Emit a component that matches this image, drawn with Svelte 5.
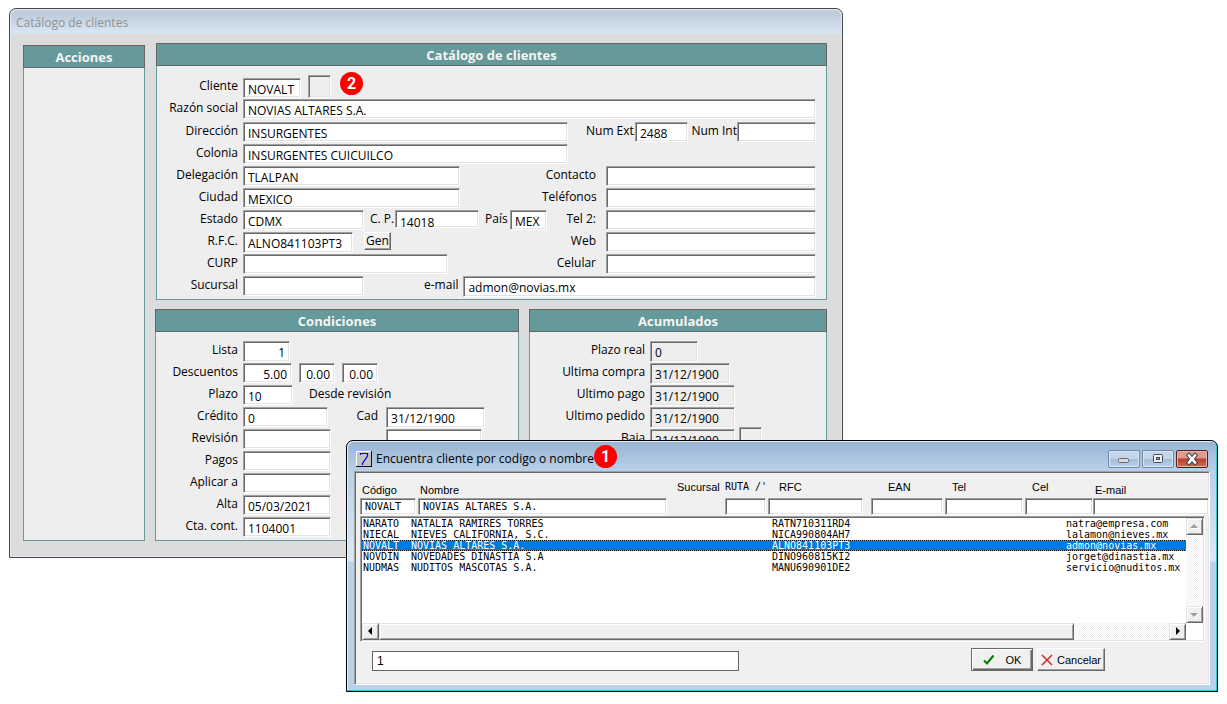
<script>
  const contactFields = {
    delegacion: { id: 'contacto', label: 'Contacto' },
    ciudad: { id: 'telefonos', label: 'Teléfonos' },
    curp: { id: 'celular', label: 'Celular' }
  };

  const dates = [
    { id: 'compra', label: 'Ultima compra', value: '31/12/1900', width: 80 },
    { id: 'pago', label: 'Ultimo pago', value: '31/12/1900', width: 85 },
    { id: 'pedido', label: 'Ultimo pedido', value: '31/12/1900', width: 85 }
  ];

  const terms = [
    { id: 'pagos', label: 'Pagos', value: '' },
    { id: 'aplicar', label: 'Aplicar a', value: '' },
    { id: 'alta', label: 'Alta', value: '05/03/2021' },
    { id: 'cuenta', label: 'Cta. cont.', value: '1104001' }
  ];

  const filters = [
    { id: 'f-codigo', label: 'Código', value: 'NOVALT', cls: 'low' },
    { id: 'f-nombre', label: 'Nombre', value: 'NOVIAS ALTARES S.A.', cls: 'low wide' },
    { id: '', label: 'Sucursal', cls: 'text' },
    { id: 'f-ruta', label: "RUTA /'", value: '', cls: 'ruta' },
    { id: 'f-rfc', label: 'RFC', value: '', cls: 'rfc' },
    { id: 'f-ean', label: 'EAN', value: '', cls: 'ean' },
    { id: 'f-tel', label: 'Tel', value: '', cls: 'tel' },
    { id: 'f-cel', label: 'Cel', value: '', cls: 'cel' },
    { id: 'f-email', label: 'E-mail', value: '', cls: 'low last' }
  ];

  const clients = [
    ['NARATO', 'NATALIA RAMIRES TORRES', 'RATN710311RD4', 'natra@empresa.com'],
    ['NIECAL', 'NIEVES CALIFORNIA, S.C.', 'NICA990804AH7', 'lalamon@nieves.mx'],
    ['NOVALT', 'NOVIAS ALTARES S.A.', 'ALNO841103PT3', 'admon@novias.mx'],
    ['NOVDIN', 'NOVEDADES DINASTIA S.A', 'DINO960815KI2', 'jorget@dinastia.mx'],
    ['NUDMAS', 'NUDITOS MASCOTAS S.A.', 'MANU690901DE2', 'servicio@nuditos.mx']
  ];
  const selected = 'NOVALT';
</script>

{#snippet field(id, label, value, width, cls = '')}
  <label for={id}>{label}</label>
  <input {id} class={cls} type="text" {value} style:width={width ? `${width}px` : null} />
{/snippet}

{#snippet contact({ id, label })}
  <div class="contact">
    <label for={id}>{label}</label>
    <input {id} type="text" value="" />
  </div>
{/snippet}

<div class="desktop">
  <main class="window">
    <header class="caption">Catálogo de clientes</header>
    <div class="content">
      <section class="panel actions"><h2>Acciones</h2></section>
      <div class="column">
        <section class="panel client">
          <h2>Catálogo de clientes</h2>
          <form>
            <div class="row first">
              {@render field('cliente', 'Cliente', 'NOVALT', 58)}
              <button type="button" class="box" aria-label="Buscar"></button>
              <span class="badge">2</span>
            </div>
            <div class="row second">{@render field('razon', 'Razón social', 'NOVIAS ALTARES S.A.', 0, 'grow')}</div>
            <div class="row">
              {@render field('direccion', 'Dirección', 'INSURGENTES', 325)}
              <div class="numbers">
                {@render field('ext', 'Num Ext.', '2488', 53)}
                {@render field('int', 'Num Int', '', 0, 'grow')}
              </div>
            </div>
            <div class="row">{@render field('colonia', 'Colonia', 'INSURGENTES CUICUILCO', 325)}</div>
            <div class="row">
              <div class="side">{@render field('delegacion', 'Delegación', 'TLALPAN', 217)}</div>
              {@render contact(contactFields.delegacion)}
            </div>
            <div class="row">
              <div class="side">{@render field('ciudad', 'Ciudad', 'MEXICO', 217)}</div>
              {@render contact(contactFields.ciudad)}
            </div>
            <div class="row">
              <div class="side">
                {@render field('estado', 'Estado', 'CDMX', 121)}
                <div class="pair">{@render field('cp', 'C. P.', '14018', 84, 'short')}</div>
                <div class="pair">{@render field('pais', 'País', 'MEX', 37)}</div>
              </div>
              {@render contact({ id: 'tel2', label: 'Tel 2:' })}
            </div>
            <div class="row">
              <div class="side">
                {@render field('rfc', 'R.F.C.', 'ALNO841103PT3', 110, 'tall')}
                <button type="button" class="gen">Gen</button>
              </div>
              {@render contact({ id: 'web', label: 'Web' })}
            </div>
            <div class="row">
              <div class="side">{@render field('curp', 'CURP', '', 205)}</div>
              {@render contact(contactFields.curp)}
            </div>
            <div class="row">
              {@render field('sucursal', 'Sucursal', '', 121)}
              <div class="mail">{@render field('email', 'e-mail', 'admon@novias.mx', 0, 'tall grow')}</div>
            </div>
          </form>
        </section>

        <div class="lower">
          <section class="panel terms">
            <h2>Condiciones</h2>
            <form>
              <div class="row">{@render field('lista', 'Lista', '1', 47, 'num tall')}</div>
              <div class="row">
                {@render field('desc1', 'Descuentos', '5.00', 49, 'num')}
                <input class="num extra" type="text" value="0.00" aria-label="Segundo descuento" />
                <input class="num extra" type="text" value="0.00" aria-label="Tercer descuento" />
              </div>
              <div class="row">
                {@render field('plazo', 'Plazo', '10', 50)}
                <span class="note">Desde revisión</span>
              </div>
              <div class="row">
                {@render field('credito', 'Crédito', '0', 85)}
                <div class="expiry">{@render field('cad', 'Cad', '31/12/1900', 99, 'tall')}</div>
              </div>
              <div class="row">
                {@render field('revision', 'Revisión', '', 88)}
                <div class="expiry"><span class="blank"></span><input type="text" value="" aria-label="Segunda fecha" style:width="96px" /></div>
              </div>
              {#each terms as t}
                <div class="row">{@render field(t.id, t.label, t.value, 88)}</div>
              {/each}
            </form>
          </section>

          <section class="panel totals">
            <h2>Acumulados</h2>
            <form>
              <div class="row">{@render field('plazoreal', 'Plazo real', '0', 48, 'tall flat')}</div>
              {#each dates as d}
                <div class="row">{@render field(d.id, d.label, d.value, d.width, 'tall flat')}</div>
              {/each}
              <div class="row">
                {@render field('baja', 'Baja', '31/12/1900', 85, 'tall flat')}
                <button type="button" class="box" aria-label="Dar de baja"></button>
              </div>
            </form>
          </section>
        </div>
      </div>
    </div>
  </main>

  <div class="dialog" role="dialog" aria-labelledby="dialog-title">
    <header class="titlebar">
      <svg class="app" viewBox="0 0 16 16" aria-hidden="true">
        <path d="M0 0h16v16H0z" fill="#fff" />
        <path d="M15 0h1v16H0v-1h15z" fill="#111" />
        <path d="M1 1h14v14H1z" fill="#c3c3c3" />
        <path d="M4.500 4V2.500h7V5L6.500 12.500V14" fill="none" stroke="#0000f0" stroke-width="1.200" />
      </svg>
      <span id="dialog-title">Encuentra cliente por codigo o nombre</span>
      <span class="badge">1</span>
      <div class="tools">
        <button type="button" aria-label="Minimizar">
          <svg viewBox="0 0 30 16"><rect x="9.500" y="7.500" width="10" height="4" rx="1" fill="#dddad4" stroke="#666b76" /></svg>
        </button>
        <button type="button" aria-label="Maximizar">
          <svg viewBox="0 0 30 16"><rect x="10.500" y="3.500" width="9" height="8" rx="1" fill="#f4f4f4" stroke="#454b5c" /><rect x="13.500" y="6.500" width="3" height="2" fill="#8fa8cb" stroke="#454b5c" /></svg>
        </button>
        <button type="button" class="close" aria-label="Cerrar">
          <svg viewBox="0 0 30 16"><path d="M12 4.500l6 7m0-7l-6 7" stroke="#414656" stroke-width="4.600" stroke-linecap="square" /><path d="M12 4.500l6 7m0-7l-6 7" stroke="#fff" stroke-width="2.600" stroke-linecap="square" /></svg>
        </button>
      </div>
    </header>

    <div class="sheet">
      <div class="filters">
        {#each filters as f}
          <div class="filter {f.cls}">
            {#if f.id}
              <label for={f.id}>{f.label}</label>
              <input id={f.id} type="text" value={f.value} />
            {:else}
              <span>{f.label}</span>
            {/if}
          </div>
        {/each}
      </div>

      <div class="list">
        <div class="rows">
          <table>
            <tbody>
              {#each clients as c}
                <tr class:selected={c[0] === selected}>
                  {#each c as cell}<td>{cell}</td>{/each}
                </tr>
              {/each}
            </tbody>
          </table>
        </div>
        <div class="vbar">
          <button type="button" aria-label="Subir"><svg viewBox="0 0 13 13"><path d="M3 9l4-4 4 4z" fill="#fff" /><path d="M2 8l4-4 4 4z" fill="#a0a0a0" /></svg></button>
          <button type="button" aria-label="Bajar"><svg viewBox="0 0 13 13"><path d="M3 6l4 4 4-4z" fill="#fff" /><path d="M2 5l4 4 4-4z" fill="#a0a0a0" /></svg></button>
        </div>
        <div class="hbar">
          <button type="button" aria-label="Izquierda"><svg viewBox="0 0 13 13"><path d="M8 2v8L4 6z" fill="#000" /></svg></button>
          <div class="track"><div class="thumb"></div></div>
          <button type="button" aria-label="Derecha"><svg viewBox="0 0 13 13"><path d="M5 2v8l4-4z" fill="#000" /></svg></button>
        </div>
      </div>

      <div class="footer">
        <input type="text" value="1" aria-label="Buscar" />
        <div class="buttons">
          <button type="button" class="ok">
            <svg viewBox="0 0 12 12"><path d="M1 6.500l3 3L10.500 1.500" fill="none" stroke="#008000" stroke-width="2" /></svg>
            <span>OK</span>
          </button>
          <button type="button">
            <svg viewBox="0 0 12 12"><path d="M1 1l10 10M11 1L1 11" fill="none" stroke="#d03030" stroke-width="1.600" /></svg>
            <span>Cancelar</span>
          </button>
        </div>
      </div>
    </div>
  </div>
</div>

<style>
  :global(body) {
    background: #fff;
  }

  .desktop {
    position: relative;
    min-height: 100vh;
    overflow: hidden;
    box-sizing: border-box;
    font: 12px/18px 'Open Sans', 'Noto Sans', sans-serif;
    color: #000;
  }
  .desktop *,
  .desktop *::before {
    box-sizing: border-box;
  }

  input,
  button {
    font: inherit;
    color: inherit;
    margin: 0;
    border-radius: 0;
    flex: none;
  }

  input {
    height: 20px;
    padding: 2px 4px 0;
    background: #fff;
    border: 1px solid;
    border-color: #a0a0a0 #fff #fff #a0a0a0;
    box-shadow: inset 1px 1px #696969, inset -1px -1px #e3e3e3;
    outline: none;
  }

  button {
    display: flex;
    align-items: center;
    justify-content: center;
    padding: 0;
    background: #f0f0f0;
    border: 1px solid;
    border-color: #fff #696969 #696969 #fff;
    box-shadow: inset -1px -1px #a0a0a0;
  }

  label {
    flex: none;
    white-space: nowrap;
  }

  .window {
    position: absolute;
    left: 9px;
    right: 384px;
    top: 8px;
    background: #dcdcdc;
    border: 1px solid #48494d;
    border-radius: 7px 7px 0 0;
    box-shadow: inset 0 0 0 1px #dfe9f5;
    padding: 1px;
  }
  .caption {
    height: 24px;
    padding: 4px 5px 0;
    color: #8f9295;
    background: linear-gradient(#bfcddb 20%, #d7e4f2 90%);
    border-radius: 6px 6px 0 0;
  }

  .content {
    display: grid;
    grid-template-columns: 122px 1fr;
    gap: 10px;
    padding: 9px 14px 15px 12px;
  }
  .column {
    display: flex;
    flex-direction: column;
    gap: 9px;
    min-width: 0;
  }
  .lower {
    display: grid;
    grid-template-columns: 11fr 9fr;
    gap: 10px;
  }

  .panel {
    background: #eee;
    border: 1px solid #669999;
    min-width: 0;
  }
  .actions {
    margin-top: 2px;
  }
  .client {
    margin-left: 1px;
  }
  .panel h2 {
    margin: -1px -1px 0;
    height: 23px;
    border: 1px solid #666;
    background: #669999;
    color: #f4f4f4;
    font-size: 13px;
    font-weight: 700;
    line-height: 22px;
    text-align: center;
  }
  form {
    padding: 9px 10px 1px 0;
  }
  .terms form,
  .totals form {
    padding: 9px 0 1px 1px;
  }

  .row {
    display: flex;
    align-items: flex-start;
    height: 22px;
  }
  .row.first {
    height: 24px;
  }
  .row.second {
    height: 23px;
  }
  .row.first > label {
    margin-top: 2px;
  }
  .row.first > input {
    margin-top: 3px;
  }
  .row label {
    margin-right: 5px;
    text-align: right;
  }
  .row > label,
  .side > label {
    width: 81px;
  }
  .totals .row > label {
    width: 114px;
  }
  .row .tall {
    height: 21px;
  }
  .row .short {
    height: 18px;
    padding-top: 7px;
  }
  .grow {
    flex: 1;
    min-width: 0;
  }
  .num {
    text-align: right;
  }
  .extra {
    width: 36px;
    margin-left: 7px;
  }
  .flat {
    background: #eee;
  }
  .note {
    margin-left: 16px;
  }

  .side,
  .numbers,
  .contact,
  .pair,
  .mail,
  .expiry {
    display: flex;
    align-items: flex-start;
  }
  .side {
    width: 385px;
    flex: none;
  }
  .contact {
    flex: 1;
    min-width: 0;
  }
  .contact label {
    width: 54px;
    margin-right: 10px;
  }
  .contact input {
    flex: 1;
    min-width: 0;
  }
  .numbers {
    flex: 1;
    min-width: 0;
    margin-left: 18px;
  }
  .numbers label {
    width: 49px;
    margin-right: 0;
  }
  .pair {
    margin-left: 6px;
  }
  .pair label {
    width: 25px;
    margin-right: 0;
    text-align: left;
  }
  .mail {
    flex: 1;
    min-width: 0;
    margin-left: 60px;
  }
  .expiry {
    margin-left: auto;
    width: 162px;
  }
  .expiry label,
  .blank {
    width: 22px;
    margin-right: 8px;
    flex: none;
  }

  .box {
    width: 23px;
    height: 23px;
    margin-left: 7px;
    background: #eee;
    border-color: #a0a0a0 #fff #fff #a0a0a0;
    box-shadow: inset 1px 1px #696969, inset -1px -1px #e3e3e3;
  }
  .totals .box {
    margin: -2px 0 0 4px;
  }
  .gen {
    width: 27px;
    height: 18px;
    margin-left: 11px;
  }
  .badge {
    display: grid;
    place-items: center;
    width: 23px;
    height: 23px;
    border-radius: 50%;
    background: #f00;
    color: #fff;
    font: 700 16px/20px Roboto, sans-serif;
  }
  .row .badge {
    margin: -3px 0 0 9px;
  }

  .dialog {
    position: absolute;
    left: 346px;
    right: 9px;
    top: 440px;
    padding: 0 7px 6px;
    background: linear-gradient(#99b4d1, #b9d1ea 31px, #dbe7f5 120px, #b9d1ea 121px);
    border: 1px solid #000;
    border-radius: 7px 7px 0 0;
    box-shadow: inset -1px -1px #28c8dc, inset 1px 1px #e4eefa;
    font: 11px/14px 'Liberation Sans', Arial, sans-serif;
  }
  .titlebar {
    display: flex;
    align-items: center;
    height: 30px;
    padding: 5px 2px 0;
    font: 12px/18px 'Open Sans', 'Noto Sans', sans-serif;
  }
  .app {
    width: 16px;
    height: 16px;
    margin-right: 4px;
  }
  .titlebar .badge {
    margin-top: -4px;
  }
  .tools {
    display: flex;
    gap: 2px;
    margin-left: auto;
  }
  .tools button {
    width: 32px;
    height: 18px;
    border: 1px solid #7289a6;
    border-radius: 2px;
    background: linear-gradient(#c3d5ea 48%, #a3bcd8 52%, #bcd2ea);
    box-shadow: inset 0 0 0 1px #d7e5f5;
  }
  .tools button.close {
    border-color: #551d1d;
    background: linear-gradient(#dd9c8e 40%, #b9402b 52%, #cf6c54);
    box-shadow: inset 0 0 0 1px #e6b4a8;
  }
  .tools svg {
    width: 30px;
    height: 16px;
  }

  .sheet {
    padding: 8px 0 13px 5px;
    background: #f0f0f0;
    border: 1px solid;
    border-color: #a0a0a0 #fff #fff #a0a0a0;
    box-shadow: inset 1px 1px #696969, inset -1px -1px #e3e3e3;
  }
  .filters {
    display: grid;
    grid-template-columns: 58px 257px 50px 43px 103px 74px 80px 68px 1fr;
  }
  .filter {
    display: flex;
    flex-direction: column;
    height: 36px;
    padding-right: 2px;
  }
  .filter label,
  .filter span {
    height: 18px;
    padding-left: 2px;
  }
  .filter input {
    width: 100%;
    height: 17px;
    padding: 0 4px;
    font: 10px/12px 'DejaVu Sans Mono', monospace;
  }
  .filter.low label {
    padding-top: 3px;
  }
  .filter.wide {
    padding-right: 8px;
  }
  .filter.text,
  .filter.ruta {
    white-space: nowrap;
  }
  .filter.ruta label {
    padding-left: 0;
    font: 10px/14px 'DejaVu Sans Mono', monospace;
  }
  .filter.rfc {
    padding-right: 8px;
  }
  .filter.rfc label {
    padding-left: 11px;
  }
  .filter.ean label {
    padding-left: 17px;
  }
  .filter.tel label,
  .filter.cel label {
    padding-left: 7px;
  }
  .filter.cel,
  .filter.last {
    padding-right: 0;
  }

  .list {
    display: grid;
    grid-template-columns: 1fr 17px;
    grid-template-rows: 105px 17px;
    margin-right: 4px;
    padding: 1px;
    background: #fff;
    border: 1px solid;
    border-color: #a0a0a0 #fff #fff #a0a0a0;
    box-shadow: inset 1px 1px #696969, inset -1px -1px #e3e3e3;
  }
  table {
    width: 100%;
    border-collapse: collapse;
    table-layout: fixed;
    font: 10px/11px 'DejaVu Sans Mono', monospace;
  }
  .rows {
    overflow: hidden;
  }
  td {
    height: 11px;
    padding: 0 0 0 1px;
    white-space: nowrap;
  }
  td:nth-child(1) {
    width: 48px;
  }
  td:nth-child(2) {
    width: 361px;
  }
  td:nth-child(3) {
    width: 294px;
  }
  .selected {
    color: #fff;
    background:
      repeating-linear-gradient(90deg, #000 0 1px, #ff8728 1px 2px) top / 100% 1px no-repeat,
      repeating-linear-gradient(90deg, #000 0 1px, #ff8728 1px 2px) bottom / 100% 1px no-repeat,
      #0078d7;
  }

  .vbar,
  .track {
    background: repeating-conic-gradient(#fff 0 25%, #f0f0f0 0 50%) 0 0 / 2px 2px;
  }
  .vbar {
    display: flex;
    flex-direction: column;
    justify-content: space-between;
  }
  .vbar button,
  .hbar button {
    width: 17px;
    height: 17px;
    border-color: #e3e3e3 #696969 #696969 #e3e3e3;
    box-shadow: inset 1px 1px #fff, inset -1px -1px #a0a0a0;
  }
  .vbar svg,
  .hbar svg {
    width: 13px;
    height: 13px;
  }
  .hbar {
    display: flex;
  }
  .track {
    flex: 1;
    display: flex;
  }
  .thumb {
    width: 88%;
    background: #f0f0f0;
    border: 1px solid;
    border-color: #e3e3e3 #696969 #696969 #e3e3e3;
    box-shadow: inset 1px 1px #fff, inset -1px -1px #a0a0a0;
  }

  .footer {
    display: flex;
    align-items: flex-start;
    justify-content: space-between;
    padding: 6px 104px 0 12px;
  }
  .footer input {
    width: 367px;
    height: 20px;
    margin-top: 3px;
    padding: 0 4px;
    border: 1px solid #646464;
    box-shadow: none;
    font-size: 12px;
  }
  .buttons {
    display: flex;
    gap: 4px;
  }
  .footer button {
    height: 23px;
    width: 68px;
    gap: 4px;
  }
  .footer button.ok {
    width: 62px;
    gap: 11px;
    border-color: #696969;
    box-shadow: inset 1px 1px #fff, inset -1px -1px #696969, inset -2px -2px #a0a0a0;
  }
  .footer svg {
    width: 12px;
    height: 12px;
  }
</style>
